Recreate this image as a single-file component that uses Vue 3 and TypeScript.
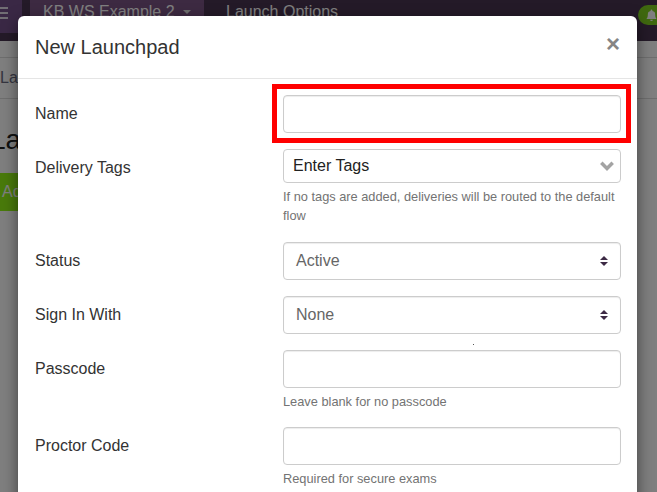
<script setup lang="ts">
</script>

<template>
  <div class="page">
    <header class="navbar">
      <span class="burger"><i></i><i></i><i></i></span>
      <span class="workspace">KB WS Example 2 <b class="caret"></b></span>
      <span class="navlink">Launch Options</span>
      <span class="bell">
        <svg width="11" height="13" viewBox="0 0 12 13"><path fill="#fff" d="M6 0a1 1 0 0 1 1 1v.6A3.600 3.600 0 0 1 10 5.200c0 3 .6 4 1.500 5H.5C1.400 9.200 2 8.200 2 5.200A3.600 3.600 0 0 1 5 1.600V1a1 1 0 0 1 1-1zM4.500 11h3a1.500 1.500 0 0 1-3 0z"/></svg>
      </span>
    </header>
    <div class="crumbs">Launchpads</div>
    <h1 class="title">Launchpads</h1>
    <button class="add">Add</button>

    <div class="overlay"></div>

    <section class="modal">
      <div class="modal-head">
        <h4>New Launchpad</h4>
        <span class="close">×</span>
      </div>
      <div class="modal-body">
        <div class="row">
          <label>Name</label>
          <div class="field">
            <div class="control tall"></div>
            <div class="highlight"></div>
          </div>
        </div>
        <div class="row tags-row">
          <label>Delivery Tags</label>
          <div class="field">
            <div class="control tags">
              <span>Enter Tags</span>
              <svg width="14" height="10" viewBox="0 0 14 10"><path d="M1.300 1.800L7 7.500 12.700 1.800" fill="none" stroke="#a3a3a3" stroke-width="3.500"/></svg>
            </div>
            <p class="help">If no tags are added, deliveries will be routed to the default flow</p>
          </div>
        </div>
        <div class="row">
          <label>Status</label>
          <div class="field">
            <div class="control tall select">
              <span>Active</span>
              <svg width="8" height="10" viewBox="0 0 8 10"><path fill="#3d2a45" d="M4 0l4 4H0zM4 10L0 6h8z"/></svg>
            </div>
          </div>
        </div>
        <div class="row">
          <label>Sign In With</label>
          <div class="field">
            <div class="control tall select">
              <span>None</span>
              <svg width="8" height="10" viewBox="0 0 8 10"><path fill="#3d2a45" d="M4 0l4 4H0zM4 10L0 6h8z"/></svg>
            </div>
          </div>
        </div>
        <div class="row">
          <label>Passcode</label>
          <div class="field">
            <div class="control tall"></div>
            <p class="help">Leave blank for no passcode</p>
          </div>
        </div>
        <div class="row">
          <label>Proctor Code</label>
          <div class="field">
            <div class="control tall"></div>
            <p class="help">Required for secure exams</p>
          </div>
        </div>
      </div>
      <i class="speck"></i>
    </section>
  </div>
</template>

<style>
html, body { margin: 0; height: 100%; overflow: hidden; }
</style>

<style scoped>
.page {
  position: relative;
  width: 657px;
  height: 492px;
  overflow: hidden;
  background: #fff;
  font-family: "Liberation Sans", Arial, sans-serif;
  color: #333;
}
.navbar {
  display: flex;
  align-items: flex-start;
  height: 41px;
  margin-bottom: 16px;
  background: #483450;
  color: #fff;
  font-size: 16px;
}
.burger {
  display: flex; flex-direction: column; gap: 3px;
  box-sizing: border-box;
  width: 22px; height: 33px; padding-top: 7px;
  margin-right: 8px;
  background: #74508a;
}
.burger i { display: block; height: 2px; width: 8px; background: #fff; opacity: .8; }
.workspace {
  display: flex; align-items: center;
  background: #7a5484;
  height: 41px;
  box-sizing: border-box;
  padding: 0 0 17px 13px;
  gap: 5px;
  width: 174px;
}
.caret { border-top: 4px solid #ddd; border-left: 4px solid transparent; border-right: 4px solid transparent; margin-left: 3px; }
.navlink { margin-left: 22px; line-height: 24px; }
.bell {
  position: absolute; left: 638px; top: 5px;
  width: 30px; height: 20px; border-radius: 10px;
  box-sizing: border-box;
  background: #7ed01e;
  display: flex; align-items: center; padding-left: 8px;
}
.crumbs {
  box-sizing: border-box;
  height: 42px;
  line-height: 40px;
  font-size: 16px;
  color: #6b6b80;
  border-top: 1px solid #ddd;
  border-bottom: 1px solid #ddd;
}
.title { margin: 23px 0 0 -10px; font-size: 28px; font-weight: 400; color: #222; line-height: 36px; white-space: nowrap; }
.add {
  display: block; margin: 15px 0 0; width: 60px; height: 38px;
  background: #92f416; color: #fff; border: 0; font: 16px "Liberation Sans", Arial, sans-serif;
  padding: 0 0 0 2px; text-align: left;
  border-radius: 0;
}
.overlay { position: absolute; inset: 0; background: rgba(0, 0, 0, 0.5); }
.modal {
  position: absolute;
  left: 18px; top: 16px;
  width: 619px;
  height: 520px;
  background: #fff;
  border-radius: 6px;
  box-shadow: 0 5px 15px rgba(0, 0, 0, 0.5);
}
.modal-head {
  display: flex; align-items: center; justify-content: space-between;
  height: 62px;
  padding: 0 17px;
  border-bottom: 1px solid #e5e5e5;
}
.modal-head h4 { margin: 0; font-size: 20px; font-weight: 400; color: #333; }
.close { font-size: 24px; font-weight: 700; color: #858585; line-height: 1; margin-top: -6px; }
.modal-body { padding: 16px 16px 0 17px; }
.row { display: flex; margin-bottom: 16px; }
.tags-row { margin-bottom: 17px; }
label { width: 248px; font-size: 16px; line-height: 38px; color: #333; flex: none; }
.field { position: relative; width: 338px; }
.control {
  box-sizing: border-box; border: 1px solid #ccc; border-radius: 4px; background: #fff;
  font-size: 16px; color: #666;
  box-shadow: inset 0 1px 1px rgba(0,0,0,.075);
}
.tall { height: 38px; }
.select { display: flex; align-items: center; justify-content: space-between; padding: 0 12px 0 12px; }
.tags { height: 34px; display: flex; align-items: center; justify-content: space-between; padding: 0 6px 0 9px; color: #222; box-shadow: none; }
.help { margin: 4px 0 0; font-size: 12.8px; line-height: 19px; color: #737373; }
.highlight {
  position: absolute; left: -11px; right: -10px; top: -11px; bottom: -10px;
  border: 5px solid #f00;
  box-sizing: border-box;
}
.speck { position: absolute; left: 455px; top: 328px; width: 1px; height: 1px; background: #555; }
</style>
